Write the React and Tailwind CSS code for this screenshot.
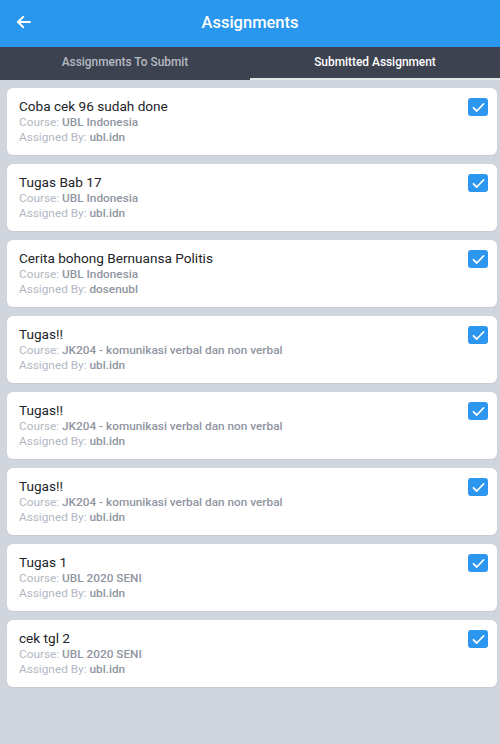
import React from 'react';

const assignments = [
  { title: 'Coba cek 96 sudah done', course: 'UBL Indonesia', by: 'ubl.idn' },
  { title: 'Tugas Bab 17', course: 'UBL Indonesia', by: 'ubl.idn' },
  { title: 'Cerita bohong Bernuansa Politis', course: 'UBL Indonesia', by: 'dosenubl' },
  { title: 'Tugas!!', course: 'JK204 - komunikasi verbal dan non verbal', by: 'ubl.idn' },
  { title: 'Tugas!!', course: 'JK204 - komunikasi verbal dan non verbal', by: 'ubl.idn' },
  { title: 'Tugas!!', course: 'JK204 - komunikasi verbal dan non verbal', by: 'ubl.idn' },
  { title: 'Tugas 1', course: 'UBL 2020 SENI', by: 'ubl.idn' },
  { title: 'cek tgl 2', course: 'UBL 2020 SENI', by: 'ubl.idn' },
];

const Checkbox = () => (
  <div className="w-[20px] h-[18px] rounded-[3px] bg-[#2d96ee] flex items-center justify-center">
    <svg width="13" height="11" viewBox="0 0 13 11" fill="none">
      <path d="M1.5 5.8 L4.8 9 L11.5 2" stroke="white" strokeWidth="1.8" strokeLinecap="round" strokeLinejoin="round" />
    </svg>
  </div>
);

const AssignmentCard = ({ item }) => (
  <div className="bg-white rounded-[6px] h-[67px] pl-[12px] pr-[9px] pt-[9px] flex justify-between shadow-[0_1px_1px_rgba(0,0,0,0.05)]">
    <div className="flex flex-col">
      <p className="text-[13.6px] leading-[18px] text-[#222428]">{item.title}</p>
      <p className="text-[11.8px] leading-[15px] text-[#b3b8c3]">
        Course: <span className="text-[#8f95a1] font-medium">{item.course}</span>
      </p>
      <p className="text-[11.8px] leading-[15px] text-[#b3b8c3]">
        Assigned By: <span className="text-[#8f95a1] font-medium">{item.by}</span>
      </p>
    </div>
    <div className="pt-[1px]">
      <Checkbox />
    </div>
  </div>
);

const App = () => {
  return (
    <div className="w-[500px] h-[744px] bg-[#d0d5de] flex flex-col overflow-hidden" style={{ fontFamily: 'Roboto, "Noto Sans", sans-serif' }}>
      {/* Header */}
      <header className="h-[47px] bg-[#2a97ee] flex items-center relative shrink-0">
        <div className="absolute left-[15px] top-[13px]">
          <svg width="18" height="18" viewBox="0 0 24 24" fill="none" stroke="white" strokeWidth="2.6" strokeLinecap="round" strokeLinejoin="round">
            <path d="M20 12H4" />
            <path d="M11 5l-7 7 7 7" />
          </svg>
        </div>
        <h1 className="w-full text-center text-white text-[16.5px] font-medium">Assignments</h1>
      </header>

      {/* Tabs */}
      <nav className="h-[33px] bg-[#3d4250] flex shrink-0">
        <div className="flex-1 flex items-center justify-center text-[11.9px] font-medium text-[#b5b9c2] pb-[2px]">
          Assignments To Submit
        </div>
        <div className="flex-1 flex items-center justify-center text-[11.9px] font-medium text-white border-b-2 border-[#e4e6ea]">
          Submitted Assignment
        </div>
      </nav>

      {/* List */}
      <main className="flex flex-col gap-[9px] pt-[8px] pl-[7px] pr-[3px]">
        {assignments.map((a, i) => (
          <AssignmentCard key={i} item={a} />
        ))}
      </main>
    </div>
  );
};

export default App;
